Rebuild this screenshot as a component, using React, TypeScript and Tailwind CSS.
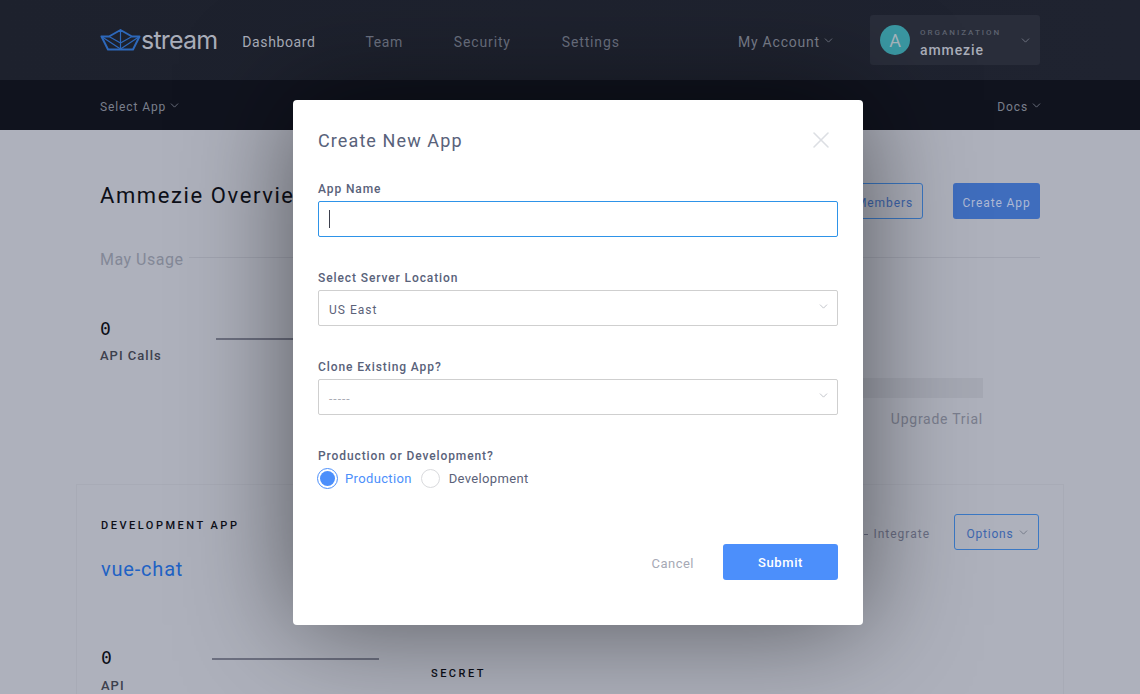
import React from "react";
import { ChevronDown, X } from "lucide-react";

const font = { fontFamily: "Roboto, 'Liberation Sans', sans-serif" };
const mono = { fontFamily: "'DejaVu Sans Mono', 'Liberation Mono', monospace" };

function Chev({ className = "" }: { className?: string }) {
  return <ChevronDown size={13} strokeWidth={1.5} className={`-mx-[3px] shrink-0 ${className}`} />;
}

function Logo() {
  return (
    <div className="flex items-center">
      <svg width="41" height="22" viewBox="0 0 41 22" fill="none" stroke="#2d68bb" strokeWidth="2" strokeLinejoin="round">
        <path d="M1.5 7.5 L9 7.5 L20.5 1 L32 7.5 L39.5 7.5 L33 20.5 L8 20.5 Z" />
        <path d="M9 7.5 L20.5 14 L32 7.5" strokeWidth="1.2" />
        <path d="M20.5 1 V20" strokeWidth="1.2" />
        <path d="M1.5 7.5 L20.5 20 L39.5 7.5" strokeWidth="1.2" />
      </svg>
      <span className="text-[25px] leading-none tracking-[-0.8px] text-[#a9adb9] font-normal" style={{ fontFamily: "Inter, sans-serif" }}>stream</span>
    </div>
  );
}

function Radio({ on, label }: { on?: boolean; label: string }) {
  return (
    <div className={`flex items-center ${on ? "gap-[7px]" : "gap-[9px]"}`}>
      {on ? (
        <span className="flex h-[21px] w-[21px] items-center justify-center rounded-full border border-[#4c8ffb]">
          <span className="h-[15px] w-[15px] rounded-full bg-[#4c8ffb]" />
        </span>
      ) : (
        <span className="h-[19px] w-[19px] rounded-full border border-[#d9dadd]" />
      )}
      <span className={`text-[13px] tracking-[0.35px] ${on ? "text-[#4c8ffb]" : "text-[#5b6279]"}`}>{label}</span>
    </div>
  );
}

function Field({ label, children, className = "" }: { label: string; children: React.ReactNode; className?: string }) {
  return (
    <div className={className}>
      <div className="mb-[4px] text-[12px] leading-[15px] font-medium tracking-[0.9px] text-[#59627a]">{label}</div>
      {children}
    </div>
  );
}

function SelectBox({ value, muted }: { value: string; muted?: boolean }) {
  return (
    <div className="flex h-9 items-center justify-between rounded-[2px] border border-[#cfcfcf] pl-[10px] pr-[10px]">
      <span className={`pt-[3px] text-[12px] tracking-[1px] ${muted ? "text-[#a9acb5]" : "text-[#5b6279]"}`}>{value}</span>
      <Chev className="mb-[4px] text-[#b4b6be]" />
    </div>
  );
}

export default function App() {
  return (
    <div className="relative h-[694px] w-[1140px] overflow-hidden bg-[#aeb1bc]" style={font}>
      <header className="flex h-20 items-center bg-gradient-to-r from-[#1d212d] to-[#1f2330] px-[100px]">
        <Logo />
        <nav className="ml-[25px] flex gap-[51px] pt-[4px] text-[14px] tracking-[0.6px]">
          <span className="-mr-px text-[#a9adb9]">Dashboard</span>
          <span className="text-[#6b7180]">Team</span>
          <span className="tracking-[0.85px] text-[#6b7180]">Security</span>
          <span className="tracking-[0.85px] text-[#6b7180]">Settings</span>
        </nav>
        <div className="ml-auto flex items-center gap-[5px] pt-[4px] text-[14px] tracking-[0.8px] text-[#7a7f8c]">
          My Account <Chev className="mb-[3px]" />
        </div>
        <div className="ml-[38px] flex h-[50px] w-[170px] items-center rounded-[3px] bg-[#292d3a] pl-[10px] pr-[11px]">
          <div className="flex h-[30px] w-[30px] items-center justify-center rounded-full bg-[#3a97a2] text-[18px] text-[#a6b5bd]">A</div>
          <div className="ml-[10px] pt-[5px]">
            <div className="text-[8px] leading-[12px] font-medium tracking-[2px] text-[#5d626f]">ORGANIZATION</div>
            <div className="mt-[2px] text-[14px] leading-[18px] font-medium tracking-[0.9px] text-[#a9adb9]">ammezie</div>
          </div>
          <Chev className="ml-auto text-[#7a7f8c]" />
        </div>
      </header>

      <div className="flex h-[50px] items-center justify-between bg-[#10131e] px-[100px] pt-[4px] text-[12px] tracking-[0.9px] text-[#7a7f8c]">
        <div className="flex items-center gap-[5px]">Select App <Chev className="mb-[3px]" /></div>
        <div className="flex items-center gap-[5px]">Docs <Chev className="mb-[3px]" /></div>
      </div>

      <main className="px-[100px]">
        <div className="mt-[53px] flex h-9 items-center justify-between">
          <h1 className="pb-[12px] text-[22px] tracking-[1.6px] text-[#0d0f18]">Ammezie Overview</h1>
          <div className="flex gap-[30px] pt-0 text-[12px] tracking-[0.9px]">
            <div className="flex h-9 w-[130px] items-center justify-end rounded-[3px] border border-[#3b78c4] pr-[9px] pt-[3px] text-[#3d66ae]">Invite Members</div>
            <div className="flex h-9 w-[87px] items-center justify-center rounded-[3px] bg-[#3f6dbd] pt-[3px] text-[#aeb9d4]">Create App</div>
          </div>
        </div>

        <div className="mt-[29px] flex h-[40px] items-start">
          <span className="text-[16px] tracking-[0.5px] text-[#838897]">May Usage</span>
          <span className="ml-[6px] mt-[9px] h-px flex-1 bg-[#a1a4b0]" />
        </div>

        <div className="mt-[29px] flex h-[125px] justify-between pr-[57px]">
          <div className="flex">
            <div className="w-[116px]">
              <div className="text-[18px] leading-[24px] text-[#0d0f18]" style={mono}>0</div>
              <div className="mt-[5px] text-[13px] font-medium tracking-[1px] text-[#3d404d]">API Calls</div>
            </div>
            <div className="mt-[21px] h-[2px] w-[167px] bg-[#6d7081]" />
          </div>
          <div className="flex w-[180px] flex-col items-end">
            <div className="mt-[61px] h-5 w-[180px] bg-[#a5a8b3]" />
            <div className="mt-[11px] text-[14px] tracking-[0.75px] text-[#7a7e8e]">Upgrade Trial</div>
          </div>
        </div>

        <section className="-mx-[24px] mt-[42px] h-[300px] border border-[#a8abb6] bg-[#aeb1bc] px-[24px] pt-[33px]">
          <div className="flex justify-between">
            <div>
              <div className="text-[11px] font-medium tracking-[2.5px] text-[#0d0f18]">DEVELOPMENT APP</div>
              <div className="mt-[19px] text-[20px] tracking-[0.8px] text-[#1f62c4]">vue-chat</div>
            </div>
            <div className="flex items-start">
              <span className="mr-[5px] mt-[16px] h-px w-[4px] bg-[#6b6f85]" />
              <span className="mt-[7px] text-[12px] tracking-[1px] text-[#6b6f85]">Integrate</span>
              <div className="-mt-[4px] ml-[24px] flex h-9 w-[85px] items-center justify-center gap-[6px] rounded-[3px] border border-[#3b78c4] pt-[3px] text-[12px] tracking-[0.8px] text-[#3d66ae]">
                Options <Chev className="mb-[3px] text-[#6b7180]" />
              </div>
            </div>
          </div>
          <div className="mt-[62px] flex">
            <div className="w-[111px]">
              <div className="text-[18px] leading-[24px] text-[#0d0f18]" style={mono}>0</div>
              <div className="mt-[6px] text-[13px] font-medium tracking-[1px] text-[#3d404d]">API</div>
            </div>
            <div className="mt-[12px] h-[2px] w-[167px] bg-[#6d7081]" />
            <div className="ml-[52px] mt-[20px] text-[11px] font-medium tracking-[2.5px] text-[#0d0f18]">SECRET</div>
          </div>
        </section>
      </main>

      <div className="absolute left-[293px] top-[100px] h-[525px] w-[570px] rounded-[4px] bg-white px-[25px] pt-[28px] shadow-[0_0_110px_rgba(0,0,0,0.52)]">
        <div className="flex items-start justify-between">
          <h2 className="text-[18px] leading-[25px] tracking-[1.1px] text-[#59627a]">Create New App</h2>
          <X size={28} strokeWidth={1.3} className="-mb-[10px] mr-[3px] -mt-[2px] text-[#dcdfe3]" />
        </div>
        <Field label="App Name" className="mt-[29px]">
          <div className="flex h-9 items-center rounded-[2px] border border-[#2e93e8] pl-[10px]">
            <span className="h-[18px] w-px bg-[#3d404d]" />
          </div>
        </Field>
        <Field label="Select Server Location" className="mt-[34px]">
          <SelectBox value="US East" />
        </Field>
        <Field label="Clone Existing App?" className="mt-[34px]">
          <SelectBox value="-----" muted />
        </Field>
        <Field label="Production or Development?" className="mt-[34px]">
          <div className="-ml-px mt-px flex items-center gap-[9px]">
            <Radio on label="Production" />
            <Radio label="Development" />
          </div>
        </Field>
        <div className="mt-[55px] flex items-center justify-end">
          <span className="mt-[4px] text-[13px] tracking-[0.5px] text-[#a6a9b5]">Cancel</span>
          <div className="ml-[29px] flex h-9 w-[115px] items-center justify-center rounded-[3px] bg-[#4c8ffb] pt-[2px] text-[13px] font-medium tracking-[0.6px] text-white">Submit</div>
        </div>
      </div>
    </div>
  );
}
